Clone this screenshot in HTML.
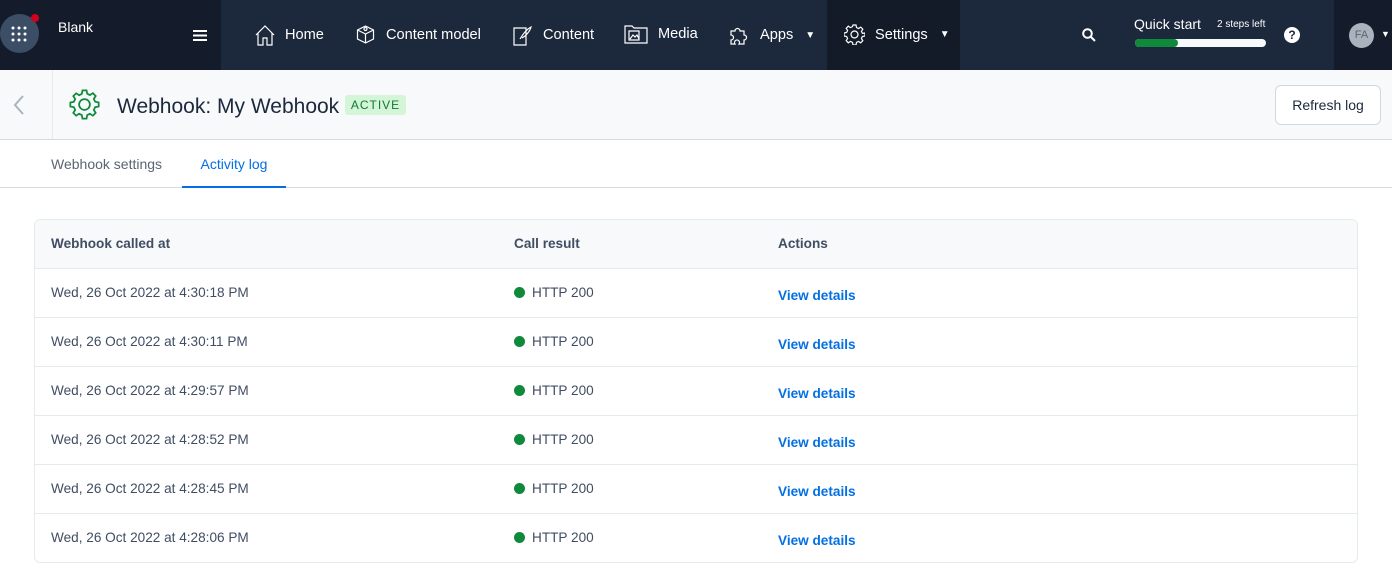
<!DOCTYPE html>
<html><head><style>
*{box-sizing:border-box;margin:0;padding:0}
body{width:1392px;height:570px;overflow:hidden;background:#fff;font-family:"Liberation Sans",sans-serif;color:#414d63}
.nav{position:absolute;top:0;left:0;width:1392px;height:70px;background:#1c283b;color:#fff}
.nl{position:absolute;left:0;top:0;width:221px;height:70px;background:#141c2b}
.nr{position:absolute;left:1334px;top:0;width:58px;height:70px;background:#141c2b}
.set{position:absolute;left:827px;top:0;width:133px;height:70px;background:#131b29}
.it{position:absolute;top:24px;font-size:14.6px;color:#fff;display:flex;align-items:center;gap:10px}
svg{display:block}
.hdr{position:absolute;top:70px;left:0;width:1392px;height:70px;background:#f7f9fa;border-bottom:1px solid #d3dce0}
.tabs{position:absolute;top:140px;left:0;width:1392px;height:48px;border-bottom:1px solid #d3dce0}
.tbl{position:absolute;top:219px;left:34px;width:1324px;height:344px;border:1px solid #e5ebed;border-radius:6px;overflow:hidden}
.row{height:49px;border-top:1px solid #e5ebed;position:relative;font-size:13.6px}
.row:first-child{height:48px;border-top:none;background:#f7f9fa;font-weight:bold;color:#414d63}
.row span{position:absolute;top:16px}
.c1{left:16px}.c2{left:479px}.c3{left:743px}
.row .c3 a{color:#036fe3;font-weight:bold;text-decoration:none}
.dot{display:inline-block;width:11px;height:11px;border-radius:50%;background:#0f8a3a;margin-right:7px;vertical-align:-1px}
</style></head><body>
<div class="nav">
 <div class="nl"></div><div class="set"></div><div class="nr"></div>
 <div style="position:absolute;left:0;top:14px;width:39px;height:39px;border-radius:50%;background:#3c4e66"></div>
 <svg style="position:absolute;left:11px;top:26px" width="16" height="16"><g fill="#fff"><circle cx="2" cy="2" r="1.5"/><circle cx="8" cy="2" r="1.5"/><circle cx="14" cy="2" r="1.5"/><circle cx="2" cy="8" r="1.5"/><circle cx="8" cy="8" r="1.5"/><circle cx="14" cy="8" r="1.5"/><circle cx="2" cy="14" r="1.5"/><circle cx="8" cy="14" r="1.5"/><circle cx="14" cy="14" r="1.5"/></g></svg>
 <div style="position:absolute;left:31px;top:14px;width:8px;height:8px;border-radius:50%;background:#d0021b"></div>
 <div style="position:absolute;left:58px;top:19px;font-size:14px">Blank</div>
 <svg style="position:absolute;left:193px;top:30px" width="14" height="11"><path d="M0 1h14M0 5.5h14M0 10h14" stroke="#fff" stroke-width="2"/></svg>
 <div class="it" style="left:255px"><svg width="20" height="22" fill="none" stroke="#fff" stroke-width="1.2"><path d="M1 11L10 2l9 9M3 9v12h5v-7h4v7h5V9"/></svg>Home</div>
 <div class="it" style="left:355px"><svg width="21" height="21" fill="none" stroke="#fff" stroke-width="1.2"><path d="M10.5 2l8 4v9l-8 4-8-4V6zM2.5 6l8 4 8-4M10.5 10v9"/><circle cx="10.5" cy="5" r="1.5"/></svg>Content model</div>
 <div class="it" style="left:512px"><svg width="21" height="22" fill="none" stroke="#fff" stroke-width="1.2"><path d="M2 4h12v17H2zM8 15c3-5 7-10 11-12-1 4-5 9-9 11"/></svg>Content</div>
 <div class="it" style="left:624px"><svg width="24" height="20" fill="none" stroke="#fff" stroke-width="1.2"><path d="M1 2h7l2 2h13v15H1zM5 7h10v9H5zM6 15l3-4 2 2 2-2 2 4"/></svg>Media</div>
 <div class="it" style="left:728px"><svg width="22" height="22" fill="none" stroke="#fff" stroke-width="1.2"><path d="M3 7h4a2.5 2.5 0 115 0h4v4a2.5 2.5 0 110 5v4h-5a2.5 2.5 0 10-4 0H3v-4a2.5 2.5 0 100-5z"/></svg>Apps <span style="font-size:10px;margin-left:2px">▼</span></div>
 <div class="it" style="left:844px"><svg width="21" height="21" fill="none" stroke="#fff" stroke-width="1.2"><circle cx="10.5" cy="10.5" r="3.5"/><path d="M9 1h3l.5 2.5 2 1 2.2-1.4 2.1 2.1-1.4 2.2 1 2L21 9v3l-2.6.5-1 2 1.4 2.2-2.1 2.1-2.2-1.4-2 1L12 21H9l-.5-2.6-2-1-2.2 1.4-2.1-2.1 1.4-2.2-1-2L0 12V9l2.6-.5 1-2-1.4-2.2 2.1-2.1 2.2 1.4 2-1z"/></svg>Settings <span style="font-size:10px;margin-left:2px">▼</span></div>
 <svg style="position:absolute;left:1082px;top:28px" width="14" height="14" fill="none" stroke="#fff" stroke-width="2"><circle cx="5.5" cy="5.5" r="4.3"/><path d="M8.5 8.5L13 13"/></svg>
 <div style="position:absolute;left:1134px;top:16px;font-size:14px">Quick start</div>
 <div style="position:absolute;left:1217px;top:19px;font-size:10px">2 steps left</div>
 <div style="position:absolute;left:1135px;top:39px;width:131px;height:8px;border-radius:4px;background:#f7f9fa"><div style="width:43px;height:8px;border-radius:4px;background:#0f8a3a"></div></div>
 <div style="position:absolute;left:1284px;top:27px;width:16px;height:16px;border-radius:50%;background:#fff;color:#1c283b;font-size:12px;font-weight:bold;text-align:center;line-height:16px">?</div>
 <div style="position:absolute;left:1349px;top:23px;width:25px;height:25px;border-radius:50%;background:#aab3bd;color:#5a6573;font-size:11px;text-align:center;line-height:25px">FA</div>
 <div style="position:absolute;left:1381px;top:29px;font-size:9px">▼</div>
</div>
<div class="hdr">
 <div style="position:absolute;left:52px;top:0;width:1px;height:69px;background:#e5ebed"></div>
 <svg style="position:absolute;left:13px;top:25px" width="12" height="20" fill="none" stroke="#a8b5c0" stroke-width="2"><path d="M10 1L2 10l8 9"/></svg>
 <svg style="position:absolute;left:69px;top:19px" width="31" height="31" viewBox="-1 -1 23 23" fill="none" stroke="#0f8a3a" stroke-width="1.3"><circle cx="10.5" cy="10.5" r="4"/><path d="M9 0h3l.5 2.5 2 1 2.2-1.4 2.1 2.1-1.4 2.2 1 2L21 9v3l-2.6.5-1 2 1.4 2.2-2.1 2.1-2.2-1.4-2 1L12 21H9l-.5-2.6-2-1-2.2 1.4-2.1-2.1 1.4-2.2-1-2L0 12V9l2.6-.5 1-2-1.4-2.2 2.1-2.1 2.2 1.4 2-1z"/></svg>
 <div style="position:absolute;left:117px;top:25px;font-size:21px;color:#1c283b">Webhook: My Webhook</div>
 <div style="position:absolute;left:345px;top:25px;width:61px;height:20px;background:#d4f5d8;color:#0f7a34;font-size:12px;letter-spacing:1px;text-align:center;line-height:20px;border-radius:3px">ACTIVE</div>
 <div style="position:absolute;left:1275px;top:15px;width:106px;height:40px;background:#fff;border:1px solid #cfd9e0;border-radius:6px;font-size:14px;color:#1c283b;text-align:center;line-height:38px">Refresh log</div>
</div>
<div class="tabs">
 <div style="position:absolute;left:51px;top:16px;font-size:14px;color:#5a6573">Webhook settings</div>
 <div style="position:absolute;left:182px;top:0;width:104px;height:48px;border-bottom:2px solid #036fe3;color:#036fe3;font-size:14px;text-align:center;padding-top:16px">Activity log</div>
</div>
<div class="tbl">
 <div class="row"><span class="c1">Webhook called at</span><span class="c2">Call result</span><span class="c3">Actions</span></div>
 <div class="row"><span class="c1">Wed, 26 Oct 2022 at 4:30:18 PM</span><span class="c2"><i class="dot"></i>HTTP 200</span><span class="c3" style="top:19px"><a>View details</a></span></div>
 <div class="row"><span class="c1">Wed, 26 Oct 2022 at 4:30:11 PM</span><span class="c2"><i class="dot"></i>HTTP 200</span><span class="c3" style="top:19px"><a>View details</a></span></div>
 <div class="row"><span class="c1">Wed, 26 Oct 2022 at 4:29:57 PM</span><span class="c2"><i class="dot"></i>HTTP 200</span><span class="c3" style="top:19px"><a>View details</a></span></div>
 <div class="row"><span class="c1">Wed, 26 Oct 2022 at 4:28:52 PM</span><span class="c2"><i class="dot"></i>HTTP 200</span><span class="c3" style="top:19px"><a>View details</a></span></div>
 <div class="row"><span class="c1">Wed, 26 Oct 2022 at 4:28:45 PM</span><span class="c2"><i class="dot"></i>HTTP 200</span><span class="c3" style="top:19px"><a>View details</a></span></div>
 <div class="row"><span class="c1">Wed, 26 Oct 2022 at 4:28:06 PM</span><span class="c2"><i class="dot"></i>HTTP 200</span><span class="c3" style="top:19px"><a>View details</a></span></div>
</div>
</body></html>
